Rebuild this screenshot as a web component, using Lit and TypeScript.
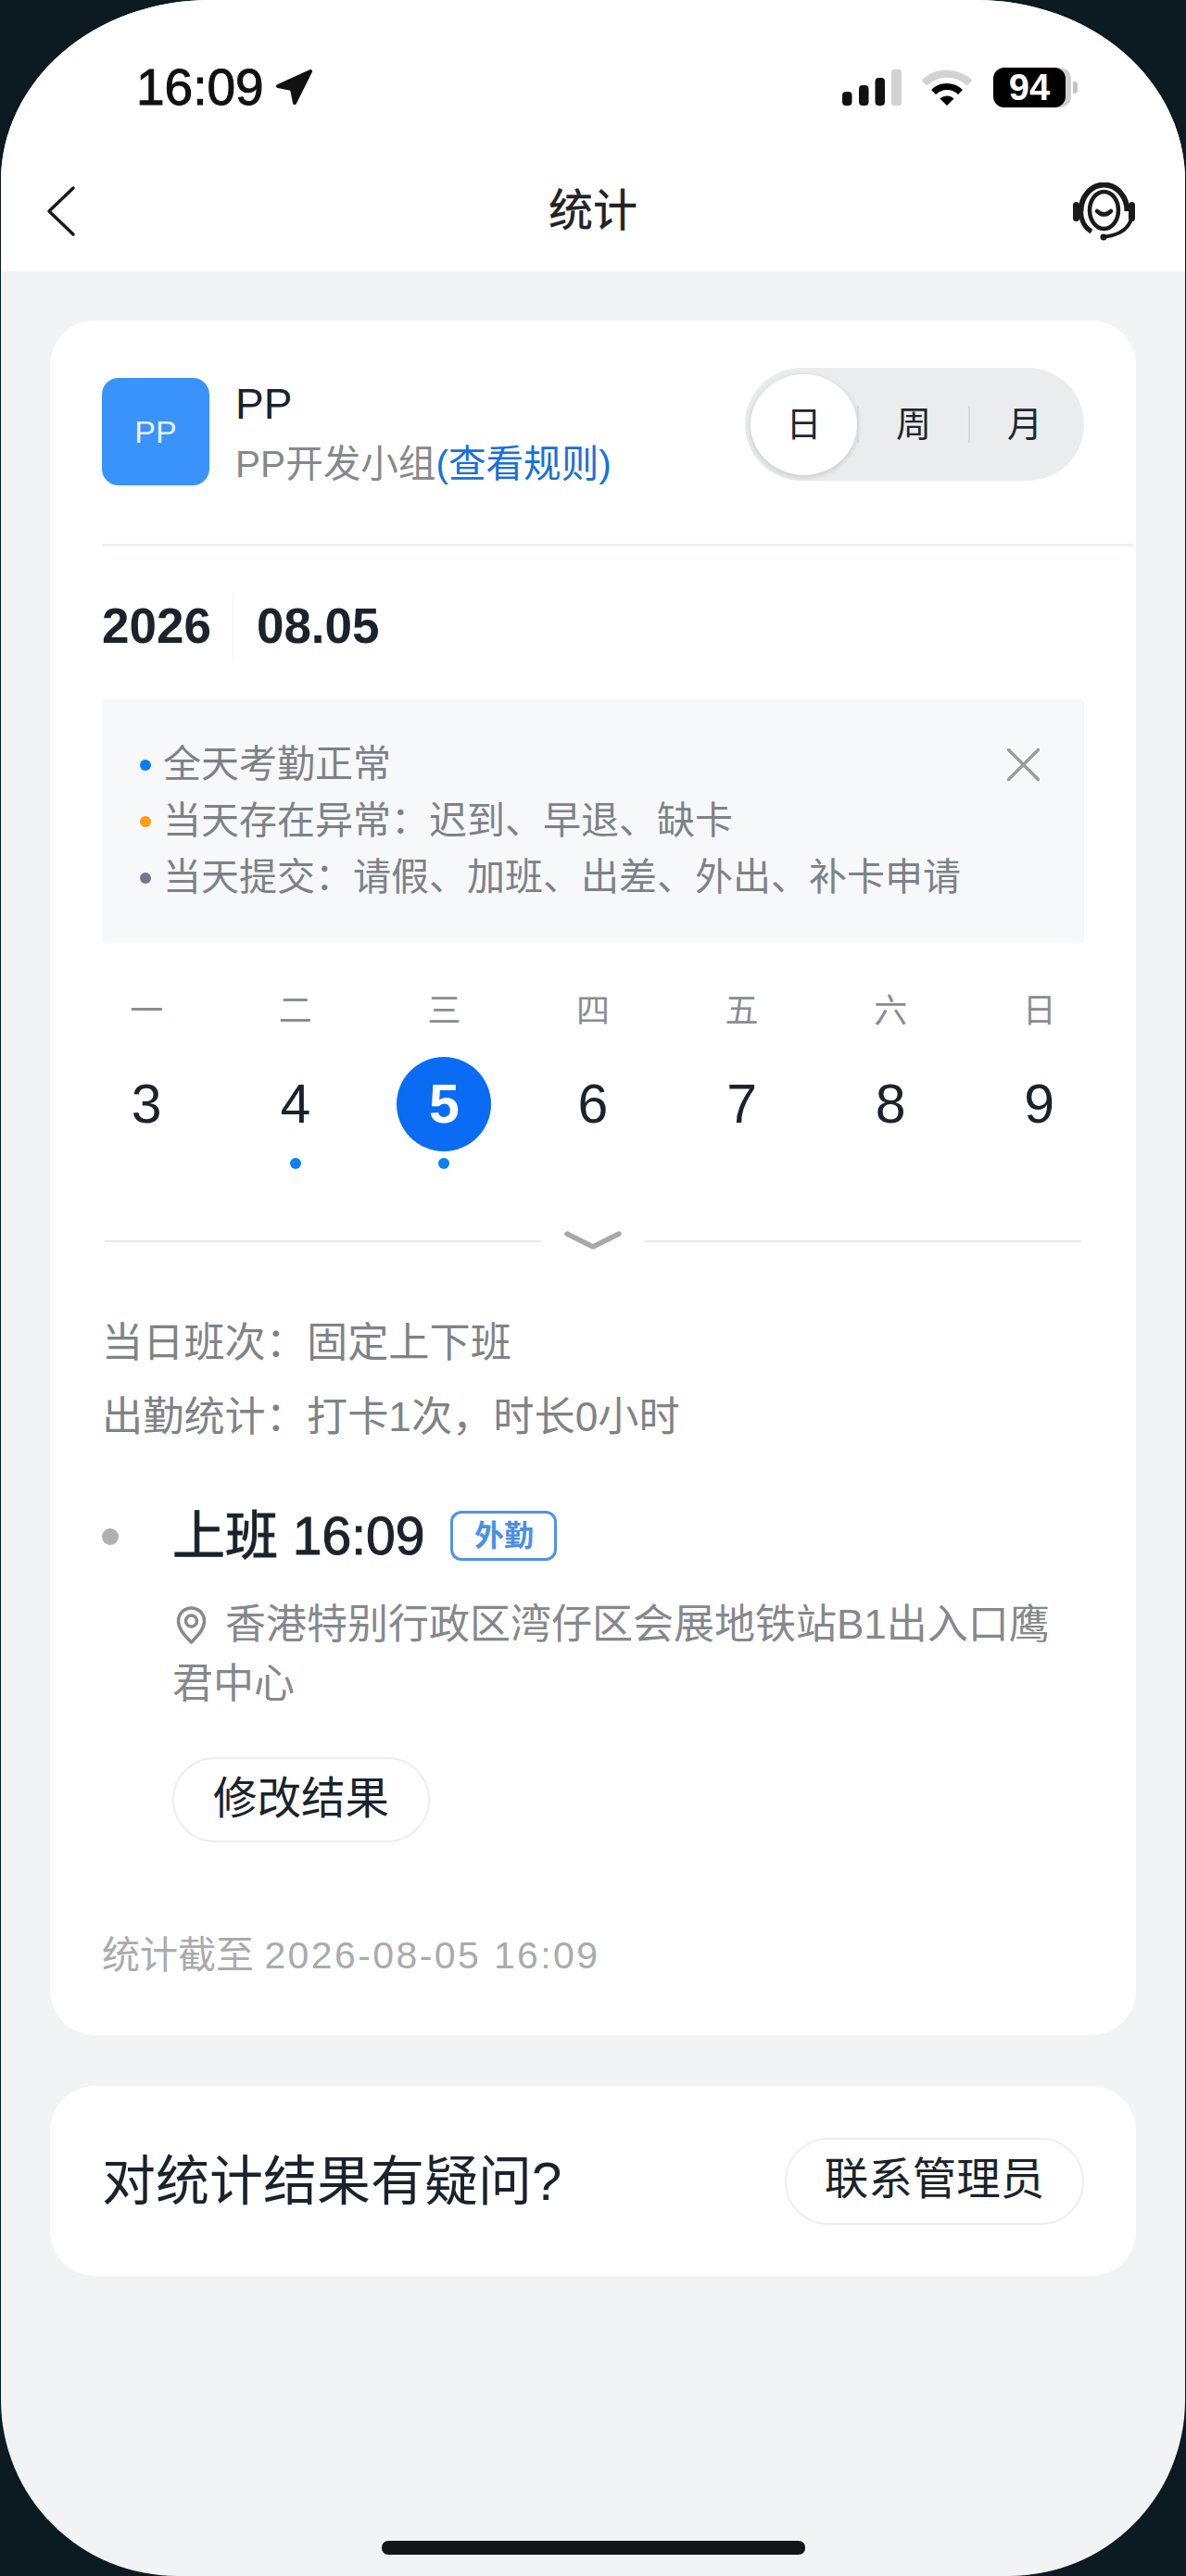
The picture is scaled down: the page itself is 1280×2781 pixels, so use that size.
import { html, css, LitElement } from 'lit';
import { customElement } from 'lit/decorators.js';

const WEEK = [
  { name: '一', day: 3, dot: false },
  { name: '二', day: 4, dot: true },
  { name: '三', day: 5, dot: true, active: true },
  { name: '四', day: 6, dot: false },
  { name: '五', day: 7, dot: false },
  { name: '六', day: 8, dot: false },
  { name: '日', day: 9, dot: false },
];

const LEGEND = [
  { color: '#0a7df5', text: '全天考勤正常' },
  { color: '#fa9d0f', text: '当天存在异常：迟到、早退、缺卡' },
  { color: '#74778f', text: '当天提交：请假、加班、出差、外出、补卡申请' },
];

@customElement('app-root')
export class AppRoot extends LitElement {
  static styles = css`
    :host {
      display: block;
      width: 1280px;
      height: 2781px;
      background: #0c1a21;
      font-family: 'Liberation Sans', 'Noto Sans CJK SC', sans-serif;
      color: #1a232c;
    }

    .screen {
      width: 1278px;
      height: 2781px;
      margin: 0 1px;
      border-radius: 225px 225px 190px 190px / 195px 195px 190px 190px;
      overflow: hidden;
      background: #f2f3f5;
      display: flex;
      flex-direction: column;
    }

    .head {
      height: 293px;
      background: #fff;
      flex: none;
    }

    .status {
      display: flex;
      align-items: center;
      height: 44px;
      margin-top: 72px;
      padding: 0 116px 0 146px;
    }

    .time {
      font-size: 55px;
      line-height: 44px;
      color: #111;
      -webkit-text-stroke: 1px #111;
    }

    .arrow {
      margin-left: 12px;
    }

    .status-right {
      margin-left: auto;
      display: flex;
      align-items: center;
    }

    .wifi {
      margin: 0 23px 0 22px;
    }

    .battery {
      width: 84px;
      height: 43px;
      border-radius: 12px;
      background: #cfcfcf;
    }

    .battery-fill {
      width: 78px;
      height: 43px;
      border-radius: 12px;
      background: #000;
      color: #fff;
      font-size: 40px;
      font-weight: 700;
      line-height: 43px;
      text-align: center;
    }

    .nub {
      width: 5px;
      height: 13px;
      margin-left: 2px;
      border-radius: 0 4px 4px 0;
      background: #c4c4c4;
    }

    .nav {
      display: grid;
      grid-template-columns: 1fr auto 1fr;
      align-items: center;
      height: 130px;
      margin-top: 47px;
      padding: 0 54px;
    }

    .nav-back {
      display: block;
      margin-left: -5px;
    }

    .nav-title {
      font-size: 48px;
      line-height: 60px;
      color: #222;
      -webkit-text-stroke: 0.4px #222;
    }

    .nav-right {
      justify-self: end;
      display: block;
    }

    .main {
      padding: 53px 53px 0;
      display: flex;
      flex-direction: column;
      gap: 55px;
    }

    .card {
      background: #fff;
      border-radius: 48px;
      padding: 0 56px;
    }

    .top-row {
      display: flex;
      align-items: flex-start;
      height: 116px;
      padding-top: 62px;
    }

    .avatar {
      width: 116px;
      height: 116px;
      border-radius: 18px;
      background: #3a93fb;
      color: #e6f2ff;
      font-size: 34px;
      line-height: 116px;
      text-align: center;
      flex: none;
    }

    .who {
      margin-left: 28px;
    }

    .who-name {
      font-size: 46px;
      line-height: 52px;
      margin-top: 2px;
    }

    .who-sub {
      font-size: 40.6px;
      line-height: 52px;
      margin-top: 13px;
      color: #85888c;
      white-space: nowrap;
    }

    .who-sub span {
      color: #1a6fdc;
    }

    .toggle {
      margin: -11px 0 0 auto;
      width: 366px;
      height: 122px;
      border-radius: 61px;
      background: #ebeced;
      display: flex;
      align-items: center;
      padding-left: 6px;
      box-sizing: border-box;
      font-size: 38px;
      color: #1d2730;
      flex: none;
    }

    .toggle-item {
      width: 118px;
      text-align: center;
      line-height: 109px;
    }

    .toggle-on {
      width: 115px;
      height: 109px;
      border-radius: 50%;
      background: #fff;
      box-shadow: 0 2px 6px rgba(0, 0, 0, 0.16);
    }

    .toggle-sep {
      width: 2px;
      height: 40px;
      background: #d8d9da;
    }

    .rule {
      height: 3px;
      background: #eeeff0;
      margin: 63px -53px 0 0;
    }

    .date-row {
      display: flex;
      align-items: center;
      height: 72px;
      margin-top: 50px;
      font-size: 53px;
      font-weight: 700;
      line-height: 72px;
    }

    .date-sep {
      width: 1px;
      height: 72px;
      margin: 0 25px 0 23px;
      background: #f2f2f2;
    }

    .legend {
      display: flex;
      justify-content: space-between;
      align-items: flex-start;
      margin-top: 43px;
      padding: 40px 48px 40px 41px;
      border-radius: 4px;
      background: #f7f8f9;
    }

    .legend-line {
      display: flex;
      align-items: center;
      font-size: 41px;
      line-height: 61px;
      color: #7d8288;
    }

    .legend-dot {
      width: 12px;
      height: 12px;
      border-radius: 50%;
      margin-right: 13px;
    }

    .close {
      display: block;
      margin-top: 13px;
    }

    .calendar {
      display: grid;
      grid-template-columns: repeat(7, 1fr);
      margin: 52px -32px 0;
    }

    .col {
      display: flex;
      flex-direction: column;
      align-items: center;
    }

    .week-name {
      font-size: 36px;
      line-height: 44px;
      color: #8a8d90;
    }

    .day {
      width: 102px;
      height: 102px;
      margin-top: 27px;
      border-radius: 50%;
      font-size: 59px;
      line-height: 102px;
      text-align: center;
    }

    .day.active {
      background: #0a6cf5;
      color: #fff;
      font-weight: 700;
    }

    .day-dot {
      width: 12px;
      height: 12px;
      margin-top: 7px;
      border-radius: 50%;
    }

    .day-dot.on {
      background: #0d7ff0;
    }

    .fold {
      display: flex;
      align-items: center;
      height: 24px;
      margin: 66px 3px 0;
    }

    .fold-line {
      flex: 1;
      height: 2px;
      background: #e8e9ea;
    }

    .fold-icon {
      display: block;
      margin: 0 25px;
    }

    .info {
      margin-top: 58px;
      font-size: 44.2px;
      line-height: 79.5px;
      color: #7f8387;
    }

    .record {
      display: flex;
      margin-top: 62px;
    }

    .record-dot {
      width: 18px;
      height: 18px;
      margin: 19px 58px 0 0;
      border-radius: 50%;
      background: #b0b0b0;
      flex: none;
    }

    .record-head {
      display: flex;
      align-items: center;
      height: 54px;
    }

    .record-title {
      font-size: 57px;
      line-height: 54px;
      -webkit-text-stroke: 1px #1a232c;
    }

    .tag {
      width: 115px;
      height: 54px;
      margin-left: 28px;
      box-sizing: border-box;
      border: 3px solid #4f93e8;
      border-radius: 12px;
      color: #4a90e2;
      font-size: 32px;
      font-weight: 700;
      line-height: 48px;
      text-align: center;
    }

    .address {
      margin-top: 37px;
      font-size: 44px;
      line-height: 64px;
      color: #85888c;
    }

    .pin {
      vertical-align: -6px;
      margin: 0 20px 0 4px;
    }

    .pill {
      box-sizing: border-box;
      display: flex;
      align-items: center;
      justify-content: center;
      border: 2px solid #eeeeef;
      border-radius: 47px;
      background: #fff;
      font-size: 47.5px;
      line-height: 60px;
      padding-bottom: 3px;
      color: #1a232c;
    }

    .fix {
      width: 278px;
      height: 92px;
      margin-top: 47px;
    }

    .updated {
      margin-top: 100px;
      padding-bottom: 64px;
      font-size: 41px;
      line-height: 44px;
      color: #a9abad;
    }

    .updated span {
      letter-spacing: 2.4px;
    }

    .help {
      display: flex;
      align-items: center;
      justify-content: space-between;
      height: 205px;
    }

    .help-text {
      font-size: 58px;
      line-height: 70px;
    }

    .contact {
      width: 323px;
      height: 94px;
    }

    .home-bar {
      width: 457px;
      height: 15px;
      margin: auto auto 23px;
      border-radius: 7px;
      background: #151619;
      flex: none;
    }
  `;

  render() {
    return html`
      <div class="screen">
        <div class="head">
          <div class="status">
            <span class="time">16:09</span>
            <svg class="arrow" width="40" height="40" viewBox="0 0 40 40">
              <path d="M38 3 L3 19 L18 22 L21 37 Z" fill="#111" stroke="#111" stroke-width="4" stroke-linejoin="round"></path>
            </svg>
            <div class="status-right">
              <svg width="64" height="40" viewBox="0 0 64 40">
                <rect x="0" y="25" width="10.5" height="15" rx="4" fill="#111"></rect>
                <rect x="18" y="18" width="10.5" height="22" rx="4" fill="#111"></rect>
                <rect x="35.5" y="10" width="10.5" height="30" rx="4" fill="#111"></rect>
                <rect x="53" y="1" width="11" height="39" rx="3" fill="#d2d2d2"></rect>
              </svg>
              <svg class="wifi" width="54" height="40" viewBox="0 0 54 40">
                <path d="M2.5 15.5 A35.5 35.5 0 0 1 51.5 15.5" fill="none" stroke="#d2d2d2" stroke-width="8"></path>
                <path d="M12.5 25.5 A20.5 20.5 0 0 1 41.5 25.5" fill="none" stroke="#000" stroke-width="7"></path>
                <path d="M27 40 L19.5 32.5 A10.6 10.6 0 0 1 34.5 32.5 Z" fill="#000"></path>
              </svg>
              <div class="battery"><div class="battery-fill">94</div></div>
              <div class="nub"></div>
            </div>
          </div>
          <div class="nav">
            <svg class="nav-back" width="32" height="56" viewBox="0 0 32 56">
              <path d="M29 3 L3 28 L29 53" fill="none" stroke="#1a1a1a" stroke-width="3.5" stroke-linecap="round" stroke-linejoin="round"></path>
            </svg>
            <div class="nav-title">统计</div>
            <svg class="nav-right" width="67" height="63" viewBox="0 0 67 63">
              <path d="M8.5 31 A25 28.5 0 0 1 58.5 31" fill="none" stroke="#1a1a1a" stroke-width="6"></path>
              <path d="M8.5 30 C8.5 42 13 49 20 53" fill="none" stroke="#1a1a1a" stroke-width="5"></path>
              <ellipse cx="33.5" cy="30" rx="15.5" ry="20" fill="none" stroke="#1a1a1a" stroke-width="4.5"></ellipse>
              <rect x="0" y="21" width="7" height="21" rx="3.5" fill="#1a1a1a"></rect>
              <rect x="60" y="21" width="7" height="21" rx="3.5" fill="#1a1a1a"></rect>
              <path d="M26 31 Q33.5 38 41 31" fill="none" stroke="#1a1a1a" stroke-width="4.5" stroke-linecap="round"></path>
              <path d="M62 42 C58 52 48 57 33 59" fill="none" stroke="#1a1a1a" stroke-width="4" stroke-linecap="round"></path>
              <circle cx="33" cy="59" r="3.5" fill="#1a1a1a"></circle>
            </svg>
          </div>
        </div>

        <div class="main">
          <section class="card">
            <div class="top-row">
              <div class="avatar">PP</div>
              <div class="who">
                <div class="who-name">PP</div>
                <div class="who-sub">PP开发小组<span>(查看规则)</span></div>
              </div>
              <div class="toggle">
                <div class="toggle-item toggle-on">日</div>
                <div class="toggle-sep"></div>
                <div class="toggle-item">周</div>
                <div class="toggle-sep"></div>
                <div class="toggle-item">月</div>
              </div>
            </div>
            <div class="rule"></div>

            <div class="date-row">
              <span>2026</span>
              <div class="date-sep"></div>
              <span>08.05</span>
            </div>

            <div class="legend">
              <div>
                ${LEGEND.map(
                  (l) => html`
                    <div class="legend-line">
                      <i class="legend-dot" style="background:${l.color}"></i>${l.text}
                    </div>
                  `
                )}
              </div>
              <svg class="close" width="35" height="35" viewBox="0 0 35 35">
                <path d="M1.5 1.5 L33.5 33.5 M33.5 1.5 L1.5 33.5" stroke="#9c9c9c" stroke-width="3.5" stroke-linecap="round"></path>
              </svg>
            </div>

            <div class="calendar">
              ${WEEK.map(
                (d) => html`
                  <div class="col">
                    <div class="week-name">${d.name}</div>
                    <div class="day ${d.active ? 'active' : ''}">${d.day}</div>
                    <div class="day-dot ${d.dot ? 'on' : ''}"></div>
                  </div>
                `
              )}
            </div>

            <div class="fold">
              <div class="fold-line"></div>
              <svg class="fold-icon" width="62" height="24" viewBox="0 0 62 24">
                <path d="M3 4 L31 18 L59 4" fill="none" stroke="#a8a8a8" stroke-width="5.5" stroke-linecap="round" stroke-linejoin="round"></path>
              </svg>
              <div class="fold-line"></div>
            </div>

            <div class="info">
              <div>当日班次：固定上下班</div>
              <div>出勤统计：打卡1次，时长0小时</div>
            </div>

            <div class="record">
              <div class="record-dot"></div>
              <div>
                <div class="record-head">
                  <span class="record-title">上班 16:09</span>
                  <span class="tag">外勤</span>
                </div>
                <div class="address">
                  <svg class="pin" width="33" height="41" viewBox="0 0 33 41">
                    <path d="M16.5 39 C10 32 2.5 25 2.5 16 A14 14 0 0 1 30.5 16 C30.5 25 23 32 16.5 39 Z" fill="none" stroke="#8a8a8a" stroke-width="3.5" stroke-linejoin="round"></path>
                    <circle cx="16.5" cy="16" r="6" fill="none" stroke="#8a8a8a" stroke-width="3.5"></circle>
                  </svg>香港特别行政区湾仔区会展地铁站B1出入口鹰君中心
                </div>
                <div class="pill fix">修改结果</div>
              </div>
            </div>

            <div class="updated">统计截至 <span>2026-08-05 16:09</span></div>
          </section>

          <section class="card help">
            <div class="help-text">对统计结果有疑问?</div>
            <div class="pill contact">联系管理员</div>
          </section>
        </div>

        <div class="home-bar"></div>
      </div>
    `;
  }
}
